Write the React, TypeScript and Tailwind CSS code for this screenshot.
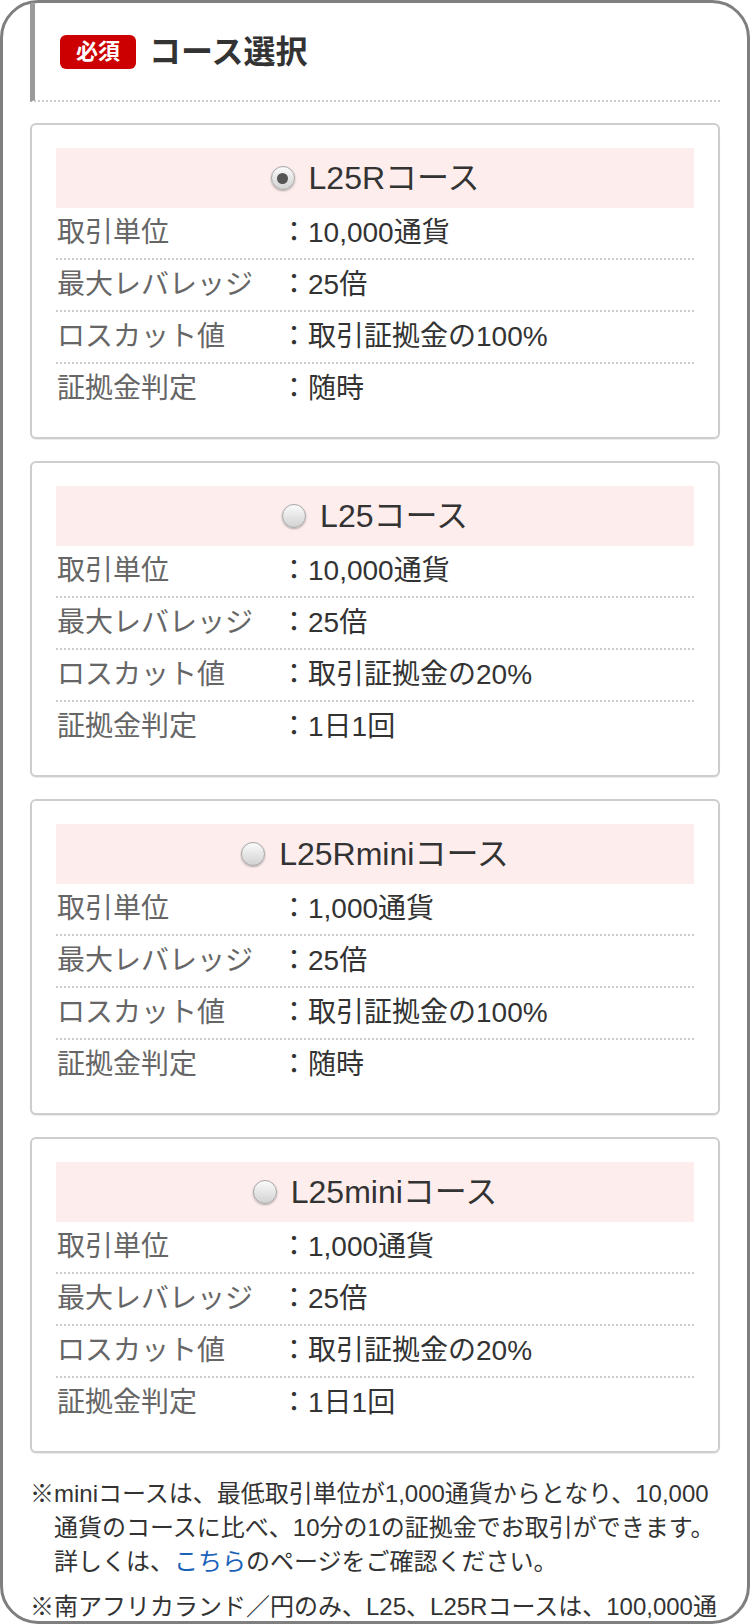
import React from "react";

const FONT = '"Liberation Sans", "Noto Sans CJK JP", sans-serif';

type Course = {
  name: string;
  checked: boolean;
  unit: string;
  lossCut: string;
  judge: string;
};

const courses: Course[] = [
  { name: "L25Rコース", checked: true, unit: "10,000通貨", lossCut: "取引証拠金の100%", judge: "随時" },
  { name: "L25コース", checked: false, unit: "10,000通貨", lossCut: "取引証拠金の20%", judge: "1日1回" },
  { name: "L25Rminiコース", checked: false, unit: "1,000通貨", lossCut: "取引証拠金の100%", judge: "随時" },
  { name: "L25miniコース", checked: false, unit: "1,000通貨", lossCut: "取引証拠金の20%", judge: "1日1回" },
];

function Radio({ checked }: { checked: boolean }) {
  return (
    <span className="relative flex h-[24px] w-[24px] items-center justify-center rounded-full border border-[#a8a8a8] bg-gradient-to-b from-[#fbfbfb] to-[#d2d2d2] shadow-[0_1px_2px_rgba(0,0,0,0.3)]">
      {checked && <span className="h-[11px] w-[11px] rounded-full bg-[#555555]" />}
    </span>
  );
}

function Row({ label, value, last }: { label: string; value: string; last?: boolean }) {
  return (
    <div
      className={
        "flex items-center text-[28px] " +
        (last ? "h-[50px]" : "h-[52px] border-b-2 border-b-[#cccccc] [border-bottom-style:dotted]")
      }
    >
      <div className="w-[224px] pl-[1px] text-[#666666]">{label}</div>
      <div className="text-[#333333]">：{value}</div>
    </div>
  );
}

function Card({ c }: { c: Course }) {
  return (
    <div className="rounded-[6px] border-2 border-[#cdcdcd] bg-white px-[24px] py-[23px] shadow-[0_1px_1px_rgba(0,0,0,0.08)]">
      <div className="flex h-[60px] items-center justify-center bg-[#fdeded]">
        <Radio checked={c.checked} />
        <span className="ml-[14px] text-[32px] text-[#333333]">{c.name}</span>
      </div>
      <Row label="取引単位" value={c.unit} />
      <Row label="最大レバレッジ" value="25倍" />
      <Row label="ロスカット値" value={c.lossCut} />
      <Row label="証拠金判定" value={c.judge} last />
    </div>
  );
}

export default function App() {
  return (
    <div className="h-[1624px] w-[750px] overflow-hidden bg-white" style={{ fontFamily: FONT }}>
      <div className="h-full overflow-hidden rounded-[38px] border-[3px] border-[#7f7f7f] px-[27px]">
        <div className="flex h-[99px] items-center border-b-2 border-l-[5px] border-b-[#cccccc] border-l-[#9a9a9a] pl-[25px] [border-bottom-style:dotted]">
          <span className="flex h-[34px] w-[76px] items-center justify-center rounded-[6px] bg-[#cc0000] text-[22px] font-bold text-white">
            必須
          </span>
          <span className="ml-[13px] text-[32px] font-bold text-[#333333]">コース選択</span>
        </div>

        <div className="mt-[21px] flex flex-col gap-[22px]">
          {courses.map((c) => (
            <Card key={c.name} c={c} />
          ))}
        </div>

        <div className="mt-[24px] text-[24px] leading-[34px] text-[#333333]">
          <div className="pl-[24px]">
            <div className="-ml-[24px] whitespace-nowrap">※miniコースは、最低取引単位が1,000通貨からとなり、10,000</div>
            <div className="whitespace-nowrap">通貨のコースに比べ、10分の1の証拠金でお取引ができます。</div>
            <div className="whitespace-nowrap">
              詳しくは、<span className="text-[#1a62b8]">こちら</span>のページをご確認ください。
            </div>
          </div>
          <div className="mt-[11px] pl-[24px]">
            <div className="-ml-[24px] whitespace-nowrap">※南アフリカランド／円のみ、L25、L25Rコースは、100,000通</div>
          </div>
        </div>
      </div>
    </div>
  );
}
